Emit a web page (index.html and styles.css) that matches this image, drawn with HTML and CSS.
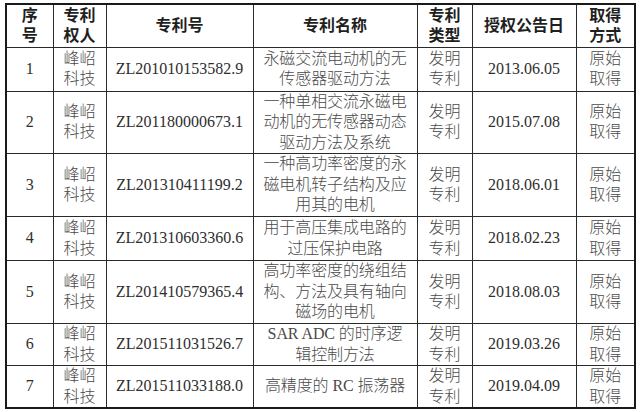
FILE: index.html
```html
<!DOCTYPE html>
<html lang="zh-CN">
<head>
<meta charset="utf-8">
<title>专利列表</title>
<link rel="stylesheet" href="styles.css">
</head>
<body>
<table class="patents">
  <colgroup>
    <col class="c-no">
    <col class="c-owner">
    <col class="c-id">
    <col class="c-name">
    <col class="c-type">
    <col class="c-date">
    <col class="c-way">
  </colgroup>
  <thead>
    <tr class="r-head">
      <th>序<br>号</th>
      <th>专利<br>权人</th>
      <th>专利号</th>
      <th>专利名称</th>
      <th>专利<br>类型</th>
      <th>授权公告日</th>
      <th>取得<br>方式</th>
    </tr>
  </thead>
  <tbody>
    <tr class="r2">
      <td class="num">1</td>
      <td class="cn">峰岹<br>科技</td>
      <td class="num">ZL201010153582.9</td>
      <td class="cn">永磁交流电动机的无<br>传感器驱动方法</td>
      <td class="cn">发明<br>专利</td>
      <td class="num">2013.06.05</td>
      <td class="cn">原始<br>取得</td>
    </tr>
    <tr class="r3">
      <td class="num">2</td>
      <td class="cn">峰岹<br>科技</td>
      <td class="num">ZL201180000673.1</td>
      <td class="cn">一种单相交流永磁电<br>动机的无传感器动态<br>驱动方法及系统</td>
      <td class="cn">发明<br>专利</td>
      <td class="num">2015.07.08</td>
      <td class="cn">原始<br>取得</td>
    </tr>
    <tr class="r3b">
      <td class="num">3</td>
      <td class="cn">峰岹<br>科技</td>
      <td class="num">ZL201310411199.2</td>
      <td class="cn">一种高功率密度的永<br>磁电机转子结构及应<br>用其的电机</td>
      <td class="cn">发明<br>专利</td>
      <td class="num">2018.06.01</td>
      <td class="cn">原始<br>取得</td>
    </tr>
    <tr class="r2">
      <td class="num">4</td>
      <td class="cn">峰岹<br>科技</td>
      <td class="num">ZL201310603360.6</td>
      <td class="cn">用于高压集成电路的<br>过压保护电路</td>
      <td class="cn">发明<br>专利</td>
      <td class="num">2018.02.23</td>
      <td class="cn">原始<br>取得</td>
    </tr>
    <tr class="r3b">
      <td class="num">5</td>
      <td class="cn">峰岹<br>科技</td>
      <td class="num">ZL201410579365.4</td>
      <td class="cn">高功率密度的绕组结<br>构、方法及具有轴向<br>磁场的电机</td>
      <td class="cn">发明<br>专利</td>
      <td class="num">2018.08.03</td>
      <td class="cn">原始<br>取得</td>
    </tr>
    <tr class="r2s">
      <td class="num">6</td>
      <td class="cn">峰岹<br>科技</td>
      <td class="num">ZL201511031526.7</td>
      <td class="cn">SAR ADC 的时序逻<br>辑控制方法</td>
      <td class="cn">发明<br>专利</td>
      <td class="num">2019.03.26</td>
      <td class="cn">原始<br>取得</td>
    </tr>
    <tr class="r2s">
      <td class="num">7</td>
      <td class="cn">峰岹<br>科技</td>
      <td class="num">ZL201511033188.0</td>
      <td class="cn">高精度的 RC 振荡器</td>
      <td class="cn">发明<br>专利</td>
      <td class="num">2019.04.09</td>
      <td class="cn">原始<br>取得</td>
    </tr>
  </tbody>
</table>
</body>
</html>
```

FILE: styles.css
```css
html, body {
  background: #ffffff;
}
body {
  margin: 3px 0 0 5px;
}
.patents {
  border-collapse: collapse;
  table-layout: fixed;
  width: 631px;
  border: 2px solid #1a1a1a;
  font-family: "Liberation Serif", "Noto Sans CJK SC", serif;
  font-size: 16px;
  color: #333333;
}
.c-no { width: 47px; }
.c-owner { width: 53px; }
.c-id { width: 147px; }
.c-name { width: 164px; }
.c-type { width: 55px; }
.c-date { width: 104px; }
.c-way { width: 59px; }

.patents th,
.patents td {
  border: 1px solid #2a2a2a;
  padding: 0 2px;
  text-align: center;
  vertical-align: middle;
  line-height: 20.5px;
  overflow: hidden;
  white-space: nowrap;
}
.patents th {
  font-family: "Liberation Sans", "Noto Sans CJK SC", sans-serif;
  font-weight: 700;
  color: #1f1f1f;
  line-height: 20px;
  padding-top: 1px;
}
.patents .cn {
  font-family: "Liberation Serif", "Noto Sans CJK SC", serif;
  font-weight: 300;
  color: #4a4a4a;
  letter-spacing: -0.1px;
}
.patents .num {
  color: #2e2e2e;
}
.r-head { height: 43px; }
.r2 { height: 44px; }
.r2s { height: 42px; }
.r3 { height: 62px; }
.r3b { height: 63px; }
```
